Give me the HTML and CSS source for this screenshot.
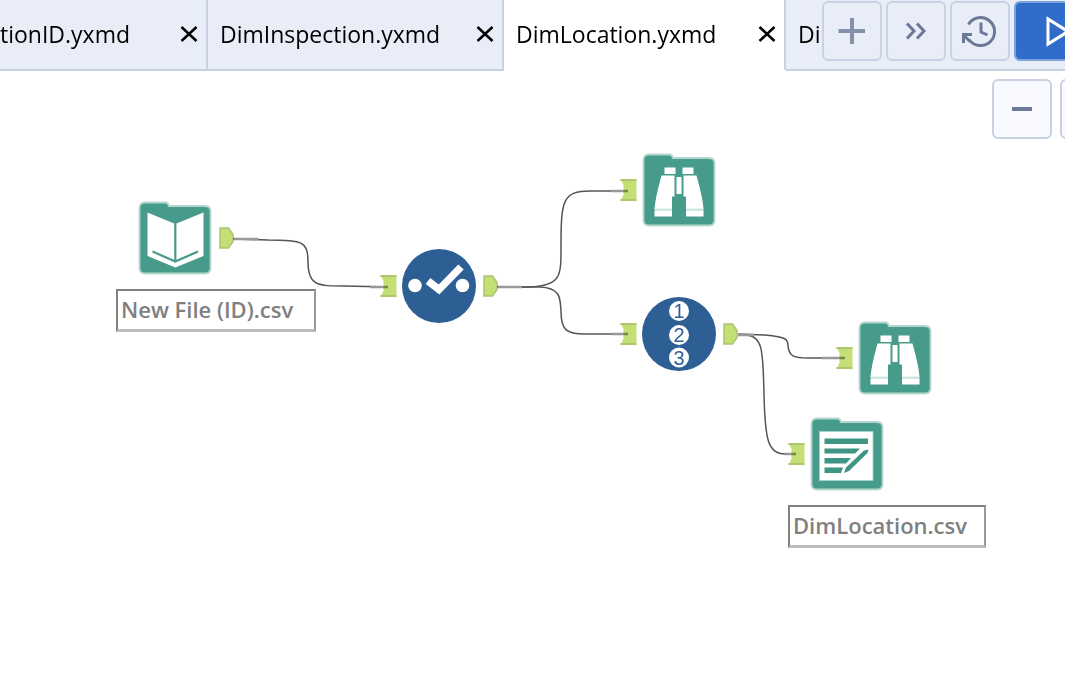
FILE: index.html
```
<!DOCTYPE html>
<html lang="en">
<head>
<meta charset="utf-8">
<meta name="viewport" content="width=device-width, initial-scale=1">
<title>DimLocation.yxmd</title>
<link rel="stylesheet" href="styles.css">
</head>
<body>
<svg class="defs" aria-hidden="true">
  <symbol id="folder" viewBox="0 0 74 74">
    <path d="M7 1.500H27.500Q30 1.500 31 5H67Q72.500 5 72.500 10.500V67Q72.500 72.500 67 72.500H7Q1.500 72.500 1.500 67V7Q1.500 1.500 7 1.500Z" fill="#479b8b" stroke="#b3d6cf" stroke-width="1.800"/>
  </symbol>
  <symbol id="binoculars" viewBox="0 0 74 74">
    <use href="#folder"/>
    <path d="M12.500 55H30V58H12.500ZM44 55H61.500V58H44Z" fill="#cfe6e2"/>
    <g fill="#fff">
      <path d="M22.500 14.500H33.500V21H22.500ZM40.500 14.500H51.500V21H40.500Z"/>
      <path d="M19.500 22.500H32.500V43.500H30V55.500H12.500Q13.500 44 19.500 22.500ZM54.500 22.500H41.500V43.500H44V55.500H61.500Q60.500 44 54.500 22.500Z"/>
      <path d="M34.500 24H39.500V41H34.500ZM12.500 58H30V63.500H12.500ZM44 58H61.500V63.500H44Z"/>
    </g>
  </symbol>
  <symbol id="anchor-in" viewBox="0 0 17 22">
    <path d="M.5.5H16.500V21.500H.5L3.500 16V6Z" fill="#c3df76"/>
    <path d="M.5 1H16.500M.5 21H16.500" stroke="#adc56e" stroke-width="2"/>
  </symbol>
  <symbol id="anchor-out" viewBox="0 0 15 22">
    <path d="M1 1H9.500L14 7.500V14.500L9.500 21H1Z" fill="#c3df76" stroke="#adc56e" stroke-width="1.500"/>
  </symbol>
</svg>

<header class="tabbar">
  <nav class="tabs" aria-label="Open workflows">
    <div class="tab tab-first"><a class="tab-name" href="#location-id">ationID.yxmd</a><button class="close" aria-label="Close tab"><svg viewBox="0 0 18 16"><path d="M1.500 1L16.500 15M16.500 1L1.500 15"/></svg></button></div>
    <div class="tab tab-second"><a class="tab-name" href="#inspection">DimInspection.yxmd</a><button class="close" aria-label="Close DimInspection"><svg viewBox="0 0 18 16"><path d="M1.500 1L16.500 15M16.500 1L1.500 15"/></svg></button></div>
    <div class="tab tab-active"><a class="tab-name" href="#location" aria-current="page">DimLocation.yxmd</a><button class="close" aria-label="Close DimLocation"><svg viewBox="0 0 18 16"><path d="M1.500 1L16.500 15M16.500 1L1.500 15"/></svg></button></div>
    <div class="tab tab-last"><a class="tab-name" href="#next">Di</a></div>
  </nav>
  <div class="actions">
    <button class="tool" aria-label="New workflow"><svg viewBox="0 0 60 60"><path class="soft" d="M16.500 30H43M30 17V43"/></svg></button>
    <button class="tool" aria-label="More tabs"><svg viewBox="0 0 60 60"><path d="M21 22.500L28 30L21 37.500M31 22.500L38 30L31 37.500"/></svg></button>
    <button class="tool" aria-label="Schedule history"><svg viewBox="0 0 60 60"><path d="M18.500 23.500A14 14 0 1 1 19 38.500M31 21.500V31L37.500 34"/><path d="M13.500 42V33.500H22M14 34.500L20 40.500"/></svg></button>
    <button class="tool tool-run" aria-label="Run"><svg viewBox="0 0 60 60"><path d="M34 18V43L54 30.500Z"/></svg></button>
  </div>
</header>

<main class="canvas">
  <svg class="wires" viewBox="0 71 1065 616" aria-hidden="true">
    <path d="M233 239L268 240C302 240 308 241 308 262C308 286 318 286 345 286L388 287"/>
    <path d="M497 287H530C562 286 561 275 561 245C561 200 563 191 590 191H628"/>
    <path d="M497 287H540C562 288 560 300 561 311C561 330 566 334 585 334H628"/>
    <path d="M738 334L765 335C788 337 788 340 788 346C789 357 795 358 808 358H845"/>
    <path d="M738 335H745C763 336 763 350 764 394C765 440 768 454 785 454H796"/>
    <g class="tails"><path d="M233 239H258M370 287H388M497 287H522M611 191H628M611 334H628M738 335H754M822 358H845M785 454H796"/></g>
  </svg>

  <button class="node input-file" aria-label="Input Data"><svg viewBox="0 0 74 74"><use href="#folder"/><path d="M9.500 11.500L37.300 23L65.500 11.500V55L37.300 66.500L9.500 55Z" fill="#fff"/><path d="M37.300 22V60M14.500 50.500L37.300 60.500L60 50.500" fill="none" stroke="#479b8b" stroke-width="2.200"/></svg></button>
  <svg class="anchor out input-file-out"><use href="#anchor-out"/></svg>
  <div class="caption input-caption">New File (ID).csv</div>

  <svg class="anchor select-in"><use href="#anchor-in"/></svg>
  <button class="node select" aria-label="Select"><svg viewBox="0 0 74 74"><circle cx="37" cy="37" r="37" fill="#2d5f95"/><circle cx="13" cy="36.500" r="6.800" fill="#fff"/><circle cx="60.500" cy="36.500" r="6.800" fill="#fff"/><path d="M26 32L37 40.500L59 18" fill="none" stroke="#fff" stroke-width="7.500"/></svg></button>
  <svg class="anchor out select-out"><use href="#anchor-out"/></svg>

  <svg class="anchor browse-a-in"><use href="#anchor-in"/></svg>
  <button class="node browse-a" aria-label="Browse"><svg viewBox="0 0 74 74"><use href="#binoculars"/></svg></button>

  <svg class="anchor record-in"><use href="#anchor-in"/></svg>
  <button class="node record" aria-label="Record ID"><svg viewBox="0 0 74 74"><circle cx="37" cy="37" r="37" fill="#2d5f95"/><g fill="#fff"><circle cx="37" cy="14" r="10"/><circle cx="37" cy="38" r="10"/><circle cx="37" cy="60.500" r="10"/></g><g class="digits"><text x="37" y="21">1</text><text x="37" y="45">2</text><text x="37" y="68">3</text></g></svg></button>
  <svg class="anchor out record-out"><use href="#anchor-out"/></svg>

  <svg class="anchor browse-b-in"><use href="#anchor-in"/></svg>
  <button class="node browse-b" aria-label="Browse"><svg viewBox="0 0 74 74"><use href="#binoculars"/></svg></button>

  <svg class="anchor output-in"><use href="#anchor-in"/></svg>
  <button class="node output-file" aria-label="Output Data"><svg viewBox="0 0 74 74"><use href="#folder"/><path d="M9.500 14.500H63V63.500H9.500Z" fill="#fff" stroke="#a5d2c9"/><path d="M14.500 21.500H58V27H14.500ZM14.500 31.500H50L45 36.500H14.500ZM14.500 41H41L36 46.500H14.500ZM14.500 50.500H33L31 56H14.500ZM34 56L36 50.500L54 33.500L58.500 32.500L57.500 36L39 54Z" fill="#3f9584"/></svg></button>
  <div class="caption output-caption">DimLocation.csv</div>

  <div class="zoom">
    <button class="tool" aria-label="Zoom out"><svg viewBox="0 0 60 60"><path class="bar" d="M20 30H40"/></svg></button>
    <button class="tool" aria-label="Zoom in"></button>
  </div>
</main>
</body>
</html>
```
FILE: styles.css
```
* {
  box-sizing: border-box;
}

body {
  display: flex;
  flex-direction: column;
  min-height: 100vh;
  margin: 0;
  overflow: hidden;
  background: #fff;
  color: #000;
  font-family: "Open Sans", "Noto Sans", sans-serif;
}

button {
  padding: 0;
  border: 0;
  background: none;
}

svg {
  display: block;
}

.defs {
  position: absolute;
  width: 0;
  height: 0;
}

.tabbar {
  display: flex;
  height: 71px;
  background: #e9edf7;
}

.tabs {
  display: flex;
  flex: 1;
  min-width: 0;
  overflow: hidden;
}

.tab {
  display: flex;
  flex: none;
  align-items: center;
  justify-content: space-between;
  padding: 0 8px 2px 12px;
  overflow: hidden;
  border-right: 2px solid #c9d1e5;
  border-bottom: 2px solid #c9d1e5;
  font-size: 23px;
  line-height: 32px;
  white-space: nowrap;
}

.tab-first {
  justify-content: flex-end;
  gap: 50px;
  width: 208px;
  padding-left: 0;
}

.tab-second {
  width: 296px;
}

.tab-active {
  width: 282px;
  border-bottom-color: #fff;
  background: #fff;
}

.tab-last {
  flex: 1;
  border-right: 0;
  padding-right: 0;
}

.tab-name {
  color: inherit;
  text-decoration: none;
}

.close {
  flex: none;
  width: 18px;
  height: 16px;
}

.close path {
  fill: none;
  stroke: #000;
  stroke-width: 2.5;
}

.actions {
  display: flex;
  flex: none;
  gap: 4px;
  width: 244px;
  padding: 1px 0 0 1px;
  overflow: hidden;
  border-bottom: 2px solid #c9d1e5;
}

.tool {
  flex: none;
  width: 60px;
  height: 60px;
  border: 2px solid #c9d1e5;
  border-radius: 6px;
}

.tool svg {
  width: 60px;
  height: 60px;
  margin: -2px;
}

.tool path {
  fill: none;
  stroke: #6b7897;
  stroke-width: 3;
}

.tool .soft {
  stroke: #8590ab;
  stroke-width: 4;
}

.tool .bar {
  stroke-width: 4;
}

.tool-run {
  border-color: #7ba4dc;
  background: #306dca;
}

.tool-run path {
  stroke: #fff;
}

.canvas {
  position: relative;
  flex: 1;
}

.wires {
  position: absolute;
  top: 0;
  left: 0;
  width: 1065px;
  height: 616px;
}

.wires path {
  fill: none;
  stroke: #555;
  stroke-width: 1.5;
}

.wires .tails path {
  stroke: #999;
  stroke-width: 2.5;
}

.node,
.anchor,
.caption {
  position: absolute;
}

.node,
.node svg {
  width: 74px;
  height: 74px;
}

.anchor {
  width: 17px;
  height: 22px;
  mix-blend-mode: multiply;
}

.anchor.out {
  width: 15px;
}

.caption {
  height: 43px;
  padding-left: 3px;
  border: 2px solid #808080;
  border-right-color: #999;
  border-bottom: 3px solid #bdbdbd;
  background: #fff;
  color: #808080;
  font-size: 22px;
  font-weight: 600;
  line-height: 36px;
  white-space: nowrap;
}

.digits {
  fill: #2d5f95;
  font-size: 20px;
  text-anchor: middle;
}

.input-file { left: 138px; top: 130px; }
.input-file-out { left: 219px; top: 156px; }
.input-caption { left: 116px; top: 218px; width: 200px; }
.select-in { left: 380px; top: 204px; }
.select { left: 402px; top: 178px; }
.select-out { left: 483px; top: 204px; }
.browse-a-in { left: 620px; top: 108px; }
.browse-a { left: 642px; top: 82px; }
.record-in { left: 620px; top: 252px; }
.record { left: 642px; top: 226px; }
.record-out { left: 723px; top: 252px; }
.browse-b-in { left: 836px; top: 276px; }
.browse-b { left: 858px; top: 250px; }
.output-in { left: 788px; top: 372px; }
.output-file { left: 810px; top: 346px; }
.output-caption { left: 788px; top: 434px; width: 198px; }

.zoom {
  position: absolute;
  top: 8px;
  right: 0;
  display: flex;
  gap: 8px;
  width: 73px;
  overflow: hidden;
}

.zoom .tool {
  background: #f9faff;
}
```
